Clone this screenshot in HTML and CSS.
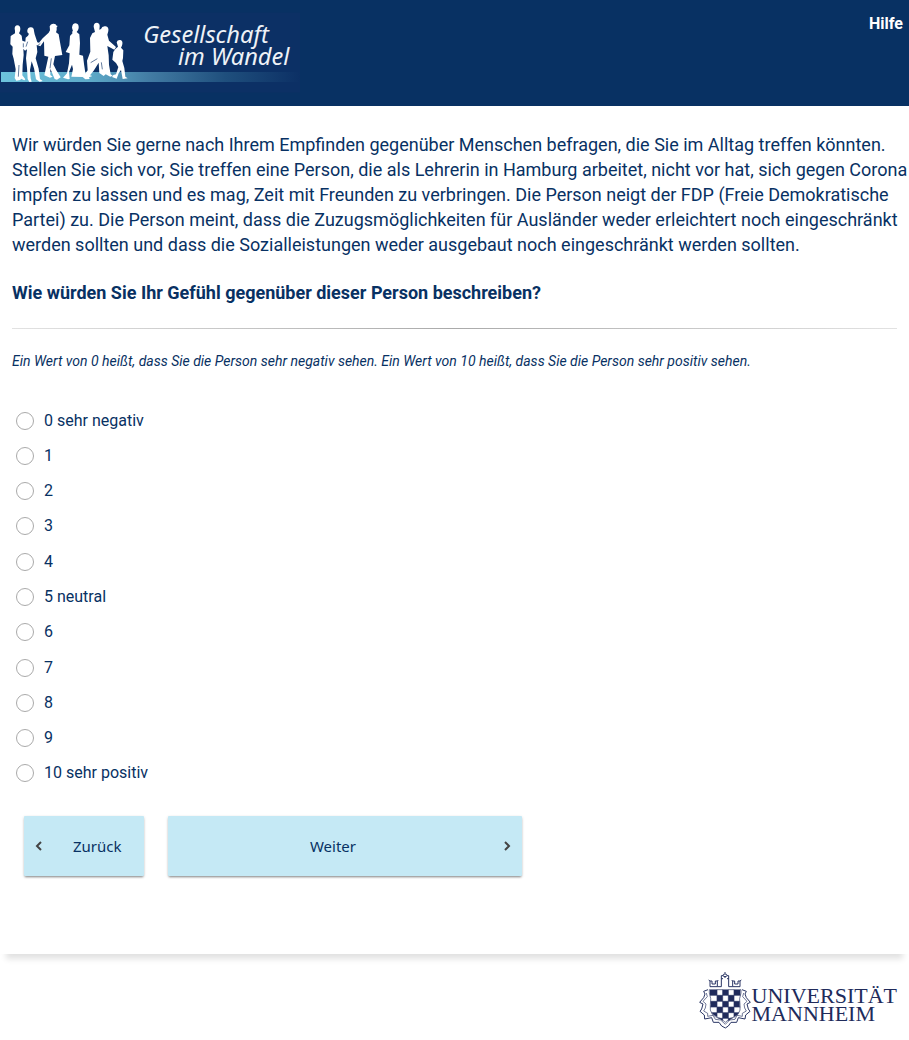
FILE: index.html
```html
<!DOCTYPE html>
<html lang="de">
<head>
<meta charset="utf-8">
<meta name="viewport" content="width=device-width, initial-scale=1">
<title>Gesellschaft im Wandel</title>
<link rel="stylesheet" href="styles.css">
</head>
<body>
<header class="header">
  <svg class="brand" viewBox="0 0 900 288" role="img" aria-label="Gesellschaft im Wandel">
    <defs>
      <linearGradient id="band" x1="0" x2="1" y1="0" y2="0">
        <stop offset="0" stop-color="#6dc3dc"/>
        <stop offset=".3" stop-color="#5da9c8"/>
        <stop offset=".5" stop-color="#427ba3"/>
        <stop offset=".75" stop-color="#1f4f7d"/>
        <stop offset="1" stop-color="#0c3065"/>
      </linearGradient>
    </defs>
    <rect x="0" y="8" width="900" height="240" fill="#0c3065"/>
    <rect x="3" y="186" width="897" height="30" fill="url(#band)"/>
    <g fill="#fff">
      <path d="M44 56Q44 47 52 46Q61 47 61 57Q61 64 57 70L65 77L67 92L76 95L77 83L84 77L87 71Q81 70 82 61Q84 51 93 52Q102 53 102 63L104 73L107 82L112 97L117 98L128 85L146 68L150 61L149 49Q152 40 161 41Q169 41 168 46L173 48L170 52Q171 60 168 67L176 73L179 91L187 135L165 138L160 163L169 181L182 202L171 209L164 207L151 176L151 195L158 200L150 203L133 196L139 168L145 140L133 137L132 94L121 109L110 105L112 126L107 145L116 176L120 207L128 213L119 215L108 208L102 175L95 154L90 180L92 205L95 215L88 216L83 207L81 174L78 145L81 118L75 122L70 116L71 135L68 164L67 196L76 208L73 211L63 206L61 210L49 212L44 204L47 178L41 146L37 132L38 110L31 103L32 78L45 70Q46 64 44 56Z"/>
      <path d="M216 53Q217 40 227 40Q237 41 236 54Q235 61 230 66L238 73L240 99L238 134L249 137L252 162L257 195L250 201L214 200L219 177L216 164L207 186L209 207L204 208L189 203L201 190L207 160L209 130L197 126L208 106L210 78L218 69Q213 65 219 64Z"/>
      <path d="M281 50Q281 38 291 38Q300 39 299 50L298 59L303 57Q306 47 317 49Q327 51 325 63L322 74L327 92L348 111L343 119L322 108L326 136L327 164L332 193L338 197L331 200L317 193L311 198L298 189L296 158L281 182L270 196L277 198L267 202L269 207L256 208L248 201L263 181L261 152L271 125L270 84L277 70L285 66Z"/>
      <path d="M350 97Q352 89 361 90Q369 92 367 103Q366 109 363 113L370 121L369 144L367 153L373 174L376 200L383 205L368 207L363 180L356 190L350 206L336 201L340 195L348 193L355 171L348 159L337 149L340 126L346 117L354 110Z"/>
    </g>
    <g stroke="#173b6e" stroke-width="2" fill="none">
      <path d="M70 100V112M57 165L55 200M154 145L150 175M272 158L292 146M304 157L307 178"/>
      <path d="M113 107L121 100M83 95L78 110"/>
    </g>
    <g class="brand-name">
      <text x="430" y="98">Gesellschaft</text>
      <text x="534" y="166">im Wandel</text>
    </g>
  </svg>
  <a class="help" href="#">Hilfe</a>
</header>
<main class="page">
  <form class="survey">
    <p class="lead">Wir würden Sie gerne nach Ihrem Empfinden gegenüber Menschen befragen, die Sie im Alltag treffen könnten. Stellen Sie sich vor, Sie treffen eine Person, die als Lehrerin in Hamburg arbeitet, nicht vor hat, sich gegen Corona impfen zu lassen und es mag, Zeit mit Freunden zu verbringen. Die Person neigt der FDP (Freie Demokratische Partei) zu. Die Person meint, dass die Zuzugsmöglichkeiten für Ausländer weder erleichtert noch eingeschränkt werden sollten und dass die Sozialleistungen weder ausgebaut noch eingeschränkt werden sollten.</p>
    <h1 class="question" id="question">Wie würden Sie Ihr Gefühl gegenüber dieser Person beschreiben?</h1>
    <hr class="rule">
    <p class="hint">Ein Wert von 0 heißt, dass Sie die Person sehr negativ sehen. Ein Wert von 10 heißt, dass Sie die Person sehr positiv sehen.</p>
    <div class="options" role="radiogroup" aria-labelledby="question">
      <label class="option"><input type="radio" name="rating" value="0"><span>0 sehr negativ</span></label>
      <label class="option"><input type="radio" name="rating" value="1"><span>1</span></label>
      <label class="option"><input type="radio" name="rating" value="2"><span>2</span></label>
      <label class="option"><input type="radio" name="rating" value="3"><span>3</span></label>
      <label class="option"><input type="radio" name="rating" value="4"><span>4</span></label>
      <label class="option"><input type="radio" name="rating" value="5"><span>5 neutral</span></label>
      <label class="option"><input type="radio" name="rating" value="6"><span>6</span></label>
      <label class="option"><input type="radio" name="rating" value="7"><span>7</span></label>
      <label class="option"><input type="radio" name="rating" value="8"><span>8</span></label>
      <label class="option"><input type="radio" name="rating" value="9"><span>9</span></label>
      <label class="option"><input type="radio" name="rating" value="10"><span>10 sehr positiv</span></label>
    </div>
    <div class="actions">
      <button class="button back" type="button">
        <svg class="chevron" viewBox="0 0 8 10" aria-hidden="true"><path d="M6 1L2 5L6 9"/></svg>
        <span>Zurück</span>
      </button>
      <button class="button next" type="submit">
        <span>Weiter</span>
        <svg class="chevron" viewBox="0 0 8 10" aria-hidden="true"><path d="M2 1L6 5L2 9"/></svg>
      </button>
    </div>
  </form>
</main>
<footer class="footer">
  <div class="university">
    <svg class="crest" viewBox="0 0 156 174" aria-hidden="true">
      <g fill="none" stroke="#2a3564" stroke-width="3">
        <path d="M33 44H55V27H49V36H39V27H33ZM101 44H123V27H117V36H107V27H101Z"/>
        <path d="M55 44H67V11H73M101 44H89V11H84M67 20H72M84 20H89M33 27L29 24M55 27L58 24M101 27L98 24M123 27L127 24"/>
        <ellipse cx="78" cy="10" rx="6" ry="4"/><path d="M78 5V0M78 14V18"/>
        <path d="M27 53L14 58L18 66L14 77L2 91L12 96L8 111L3 118L16 129L17 141L38 137L43 151L60 151L68 162L79 168L88 162L96 151L113 151L118 137L138 141L140 129L153 118L148 111L144 96L154 91L142 77L138 66L142 58L129 53"/>
        <path d="M22 63L25 74L12 88L21 96L19 108L14 117L26 124L26 133L42 130L49 142L65 144L79 157L92 144L108 142L114 130L130 133L130 124L142 117L137 108L135 96L144 88L131 74L134 63" stroke-width="2"/>
      </g>
      <path d="M33 54H54V70H33ZM71 54H88V70H71ZM105 54H124V70H105ZM54 70H71V88H54ZM88 70H105V88H88ZM35 88H54V105H35ZM71 88H88V105H71ZM105 88H122V105H105ZM54 105H71V122H54ZM88 105H105V122H88ZM38 122H54V134Q44 131 38 122ZM71 122H88V139H71ZM105 122H119Q115 132 105 134ZM58 139H71V146ZM88 139H99L88 148Z" fill="#202b5b"/>
      <path d="M31 53H126V63Q119 80 123 98Q126 116 117 127Q108 136 94 139L79 151L64 139Q48 136 40 127Q31 116 34 98Q38 80 31 63ZM54 53V136M71 53V145M88 53V144M105 53V136M33 70H124M35 88H122M34 105H124M38 122H120M56 139H101" fill="none" stroke="#2a3564" stroke-width="2"/>
    </svg>
    <div class="university-name">UNIVERSITÄT<br>MANNHEIM</div>
  </div>
</footer>
</body>
</html>
```
FILE: styles.css
```css
* {
  box-sizing: border-box;
}

body {
  margin: 0;
  background: #fff;
  color: #083163;
  font-family: Roboto, sans-serif;
  font-size: 16px;
}

.header {
  display: flex;
  justify-content: space-between;
  align-items: flex-start;
  padding: 10px 6px 0 0;
  background: #083163;
}

.brand {
  display: block;
  width: 300px;
  height: 96px;
}

.brand-name {
  fill: #eef2f7;
  font-family: "Noto Sans", sans-serif;
  font-size: 71px;
  font-style: italic;
}

.help {
  padding-top: 4px;
  color: #fff;
  font-weight: 700;
  line-height: 20px;
  text-decoration: none;
}

.page {
  box-shadow: 0 11px 6px -6px #e2e2e2;
}

.survey {
  padding: 26px 0 78px 12px;
}

.lead {
  margin: 0;
  font-size: 18px;
  line-height: 25px;
}

.question {
  margin: 23px 12px 23px 0;
  font-size: 18px;
  font-weight: 700;
  line-height: 25px;
}

.rule {
  height: 1px;
  margin: 0 12px 0 0;
  border: 0;
  background: linear-gradient(90deg, #e2e2e2, #aaa 50%, #e2e2e2);
}

.hint {
  margin: 22px 12px 32px 0;
  font-size: 14px;
  font-style: italic;
  line-height: 20px;
}

.options {
  display: grid;
  grid-auto-rows: 1fr;
  min-height: 388px;
}

.option {
  display: flex;
  align-items: center;
  gap: 10px;
  padding-left: 4px;
  line-height: 20px;
}

.option input {
  width: 18px;
  height: 18px;
  margin: 0;
  border: 1px solid #aaa;
  border-radius: 50%;
  background: #fff;
  appearance: none;
}

.option input:checked {
  border: 5px solid #083163;
}

.actions {
  display: flex;
  gap: 24px;
  padding: 25px 24px 0 12px;
}

.button {
  display: flex;
  align-items: center;
  height: 60px;
  padding: 0 11px;
  border: 0;
  border-radius: 1px;
  background: #c5e9f5;
  box-shadow: 0 2px 2px -1px rgba(0, 0, 0, 0.35), 0 1px 3px rgba(0, 0, 0, 0.2);
  color: #083163;
  font-family: "Noto Sans", sans-serif;
  font-size: 15px;
}

.button span {
  flex: 1;
}

.back {
  width: 120px;
}

.back span {
  padding-left: 30px;
  text-align: left;
}

.next {
  flex: 0 1 354px;
}

.next span {
  padding-right: 16px;
}

.chevron {
  width: 8px;
  height: 10px;
  fill: none;
  stroke: #444;
  stroke-width: 2;
}

.footer {
  display: flex;
  justify-content: flex-end;
  padding: 18px 12px 10px;
}

.university {
  display: flex;
  align-items: flex-start;
  gap: 1px;
}

.crest {
  width: 52px;
  height: 58px;
}

.university-name {
  padding-top: 15px;
  color: #202b5b;
  font-family: "Liberation Serif", serif;
  font-size: 22px;
  line-height: 18px;
}
```
